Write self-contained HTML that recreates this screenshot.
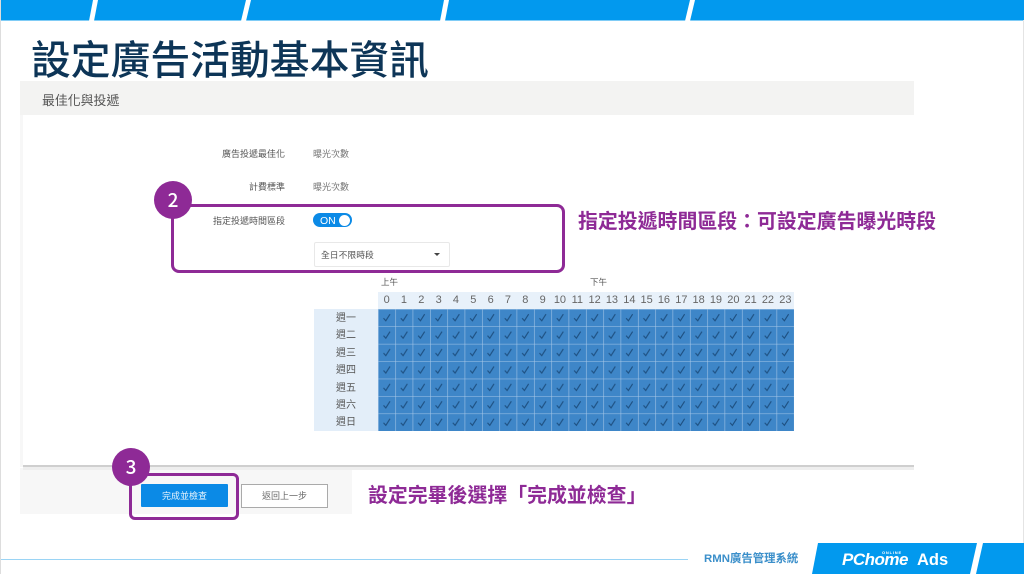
<!DOCTYPE html>
<html lang="zh-Hant">
<head>
<meta charset="utf-8">
<title>設定廣告活動基本資訊</title>
<style>
html,body{margin:0;padding:0;background:#fff}
body{width:1024px;height:574px;position:relative;overflow:hidden;font-family:"Liberation Sans","Noto Sans CJK TC",sans-serif}
.a{position:absolute;white-space:nowrap}
.lb{font-size:9px;color:#555;line-height:14px;text-align:right;right:739px}
.val{font-size:9px;color:#777;line-height:14px;left:313px}
.h{position:absolute;top:292px;width:17.3px;height:17px;line-height:17px;text-align:center;font-size:11px;color:#666}
.d{position:absolute;left:314px;width:64px;height:17.4px;line-height:17.4px;text-align:center;font-size:10px;color:#555}
.pt{color:#8e2a96;font-weight:700;font-size:19.9px;line-height:26px}
.num{color:#fff;font-size:19px;text-align:center;border-radius:50%;background:#8e2a96;font-family:"Noto Sans CJK TC",sans-serif;font-weight:500}
</style>
</head>
<body>
<svg class="a" style="left:0;top:0" width="1024" height="574" viewBox="0 0 1024 574">
<rect x="0" y="0" width="1024" height="20.5" fill="#0299ee"/>
<polygon points="93,0 98,0 94,21 89,21" fill="#fff"/>
<polygon points="246,0 251,0 246,21 241,21" fill="#fff"/>
<polygon points="444,0 449,0 445,21 440,21" fill="#fff"/>
<polygon points="690,0 695,0 690,21 685,21" fill="#fff"/>
<rect x="0" y="0" width="1" height="574" fill="#ddd"/>
<rect x="1023" y="20" width="1" height="554" fill="#e4e4e4"/>
<rect x="20" y="81" width="894" height="34" fill="#f3f3f2"/>
<rect x="20" y="115" width="3" height="352" fill="#f7f7f7"/>
<rect x="20" y="468" width="332" height="46" fill="#f7f7f7"/>
<rect x="23" y="465" width="891" height="2" fill="#cfcfcf"/>
<rect x="23" y="467" width="891" height="3" fill="#eeeeee"/>
<rect x="1" y="559" width="687" height="1" fill="#9ad4f5"/>
<polygon points="818,543 977,543 970,574 812,574" fill="#0299ee"/>
<polygon points="983,543 1024,543 1024,574 976,574" fill="#0299ee"/>
<defs>
<pattern id="cell" x="378" y="309" width="17.33" height="17.43" patternUnits="userSpaceOnUse">
<rect width="17.33" height="17.43" fill="#3e86c8"/>
<path d="M0 0H17.33M0 0V17.43" stroke="#a8c8e8" stroke-width="1.1" fill="none"/>
<path d="M5.5 9.2L7.8 11.8L12 5.2" stroke="#1d4f80" stroke-width="1.1" fill="none"/>
</pattern>
</defs>
<rect x="378" y="292" width="416" height="17" fill="#e8f1fa"/>
<rect x="314" y="309" width="64" height="122" fill="#e3eef9"/>
<rect x="378" y="309" width="416" height="122" fill="url(#cell)"/>
</svg>

<div class="a" style="left:31px;top:34px;font-size:39.8px;line-height:54px;color:#0d3557;font-weight:500">設定廣告活動基本資訊</div>
<div class="a" style="left:42px;top:91.5px;font-size:12.9px;line-height:18px;color:#555">最佳化與投遞</div>

<div class="a lb" style="top:147px">廣告投遞最佳化</div>
<div class="a lb" style="top:180px">計費標準</div>
<div class="a lb" style="top:214px">指定投遞時間區段</div>
<div class="a val" style="top:147px">曝光次數</div>
<div class="a val" style="top:180px">曝光次數</div>

<div class="a" style="left:313px;top:213px;width:39px;height:14px;border-radius:7px;background:#0b8ae6"></div>
<div class="a" style="left:320px;top:213.5px;font-size:10.5px;line-height:14px;color:#fff">ON</div>
<div class="a" style="left:339px;top:214.5px;width:11px;height:11px;border-radius:50%;background:#fff"></div>

<div class="a" style="left:314px;top:242px;width:134px;height:23px;border:1px solid #e8e8e8;border-radius:2px;background:#fff"></div>
<div class="a" style="left:321px;top:248px;font-size:8.8px;line-height:14px;color:#555">全日不限時段</div>
<div class="a" style="left:434px;top:253px;width:0;height:0;border-left:3px solid transparent;border-right:3px solid transparent;border-top:3px solid #444"></div>

<div class="a" style="left:381px;top:276px;font-size:8.5px;line-height:12px;color:#555">上午</div>
<div class="a" style="left:590px;top:276px;font-size:8.5px;line-height:12px;color:#555">下午</div>

<div class="h" style="left:378px">0</div><div class="h" style="left:395.3px">1</div><div class="h" style="left:412.7px">2</div><div class="h" style="left:430px">3</div><div class="h" style="left:447.3px">4</div><div class="h" style="left:464.7px">5</div><div class="h" style="left:482px">6</div><div class="h" style="left:499.3px">7</div><div class="h" style="left:516.7px">8</div><div class="h" style="left:534px">9</div><div class="h" style="left:551.3px">10</div><div class="h" style="left:568.7px">11</div><div class="h" style="left:586px">12</div><div class="h" style="left:603.3px">13</div><div class="h" style="left:620.7px">14</div><div class="h" style="left:638px">15</div><div class="h" style="left:655.3px">16</div><div class="h" style="left:672.7px">17</div><div class="h" style="left:690px">18</div><div class="h" style="left:707.3px">19</div><div class="h" style="left:724.7px">20</div><div class="h" style="left:742px">21</div><div class="h" style="left:759.3px">22</div><div class="h" style="left:776.7px">23</div>

<div class="d" style="top:310px">週一</div>
<div class="d" style="top:327.4px">週二</div>
<div class="d" style="top:344.8px">週三</div>
<div class="d" style="top:362.2px">週四</div>
<div class="d" style="top:379.6px">週五</div>
<div class="d" style="top:397px">週六</div>
<div class="d" style="top:414.4px">週日</div>

<div class="a" style="left:171px;top:204px;width:388px;height:63px;border:3px solid #8e2a96;border-radius:8px"></div>
<div class="a num" style="left:154px;top:181px;width:38px;height:38px;line-height:38px">2</div>

<div class="a pt" style="left:578px;top:208.5px">指定投遞時間區段：可設定廣告曝光時段</div>

<div class="a" style="left:141px;top:484px;width:87px;height:23px;line-height:25px;background:#0b8ae6;border-radius:1px;color:#e8f4fd;font-size:9px;text-align:center">完成並檢查</div>
<div class="a" style="left:241px;top:484px;width:85px;height:22px;line-height:23px;background:#fff;border:1px solid #aaa;color:#666;font-size:9px;text-align:center">返回上一步</div>
<div class="a" style="left:129px;top:473px;width:104px;height:41px;border:3px solid #8e2a96;border-radius:6px"></div>
<div class="a num" style="left:112px;top:448px;width:38px;height:38px;line-height:38px">3</div>

<div class="a pt" style="left:368px;top:483px">設定完畢後選擇「完成並檢查」</div>

<div class="a" style="left:704px;top:552px;font-size:11.4px;line-height:15px;font-weight:700;color:#3b8fca">RMN廣告管理系統</div>
<div class="a" style="left:842px;top:548px;font-size:17px;line-height:24px;font-weight:700;font-style:italic;color:#fff;letter-spacing:-0.5px">PChome</div>
<div class="a" style="left:882px;top:550px;font-size:4px;line-height:5px;font-weight:700;color:#fff;letter-spacing:0.8px;background:#0299ee">ONLINE</div>
<div class="a" style="left:917px;top:548px;font-size:16.5px;line-height:24px;font-weight:700;color:#fff">Ads</div>
</body>
</html>
